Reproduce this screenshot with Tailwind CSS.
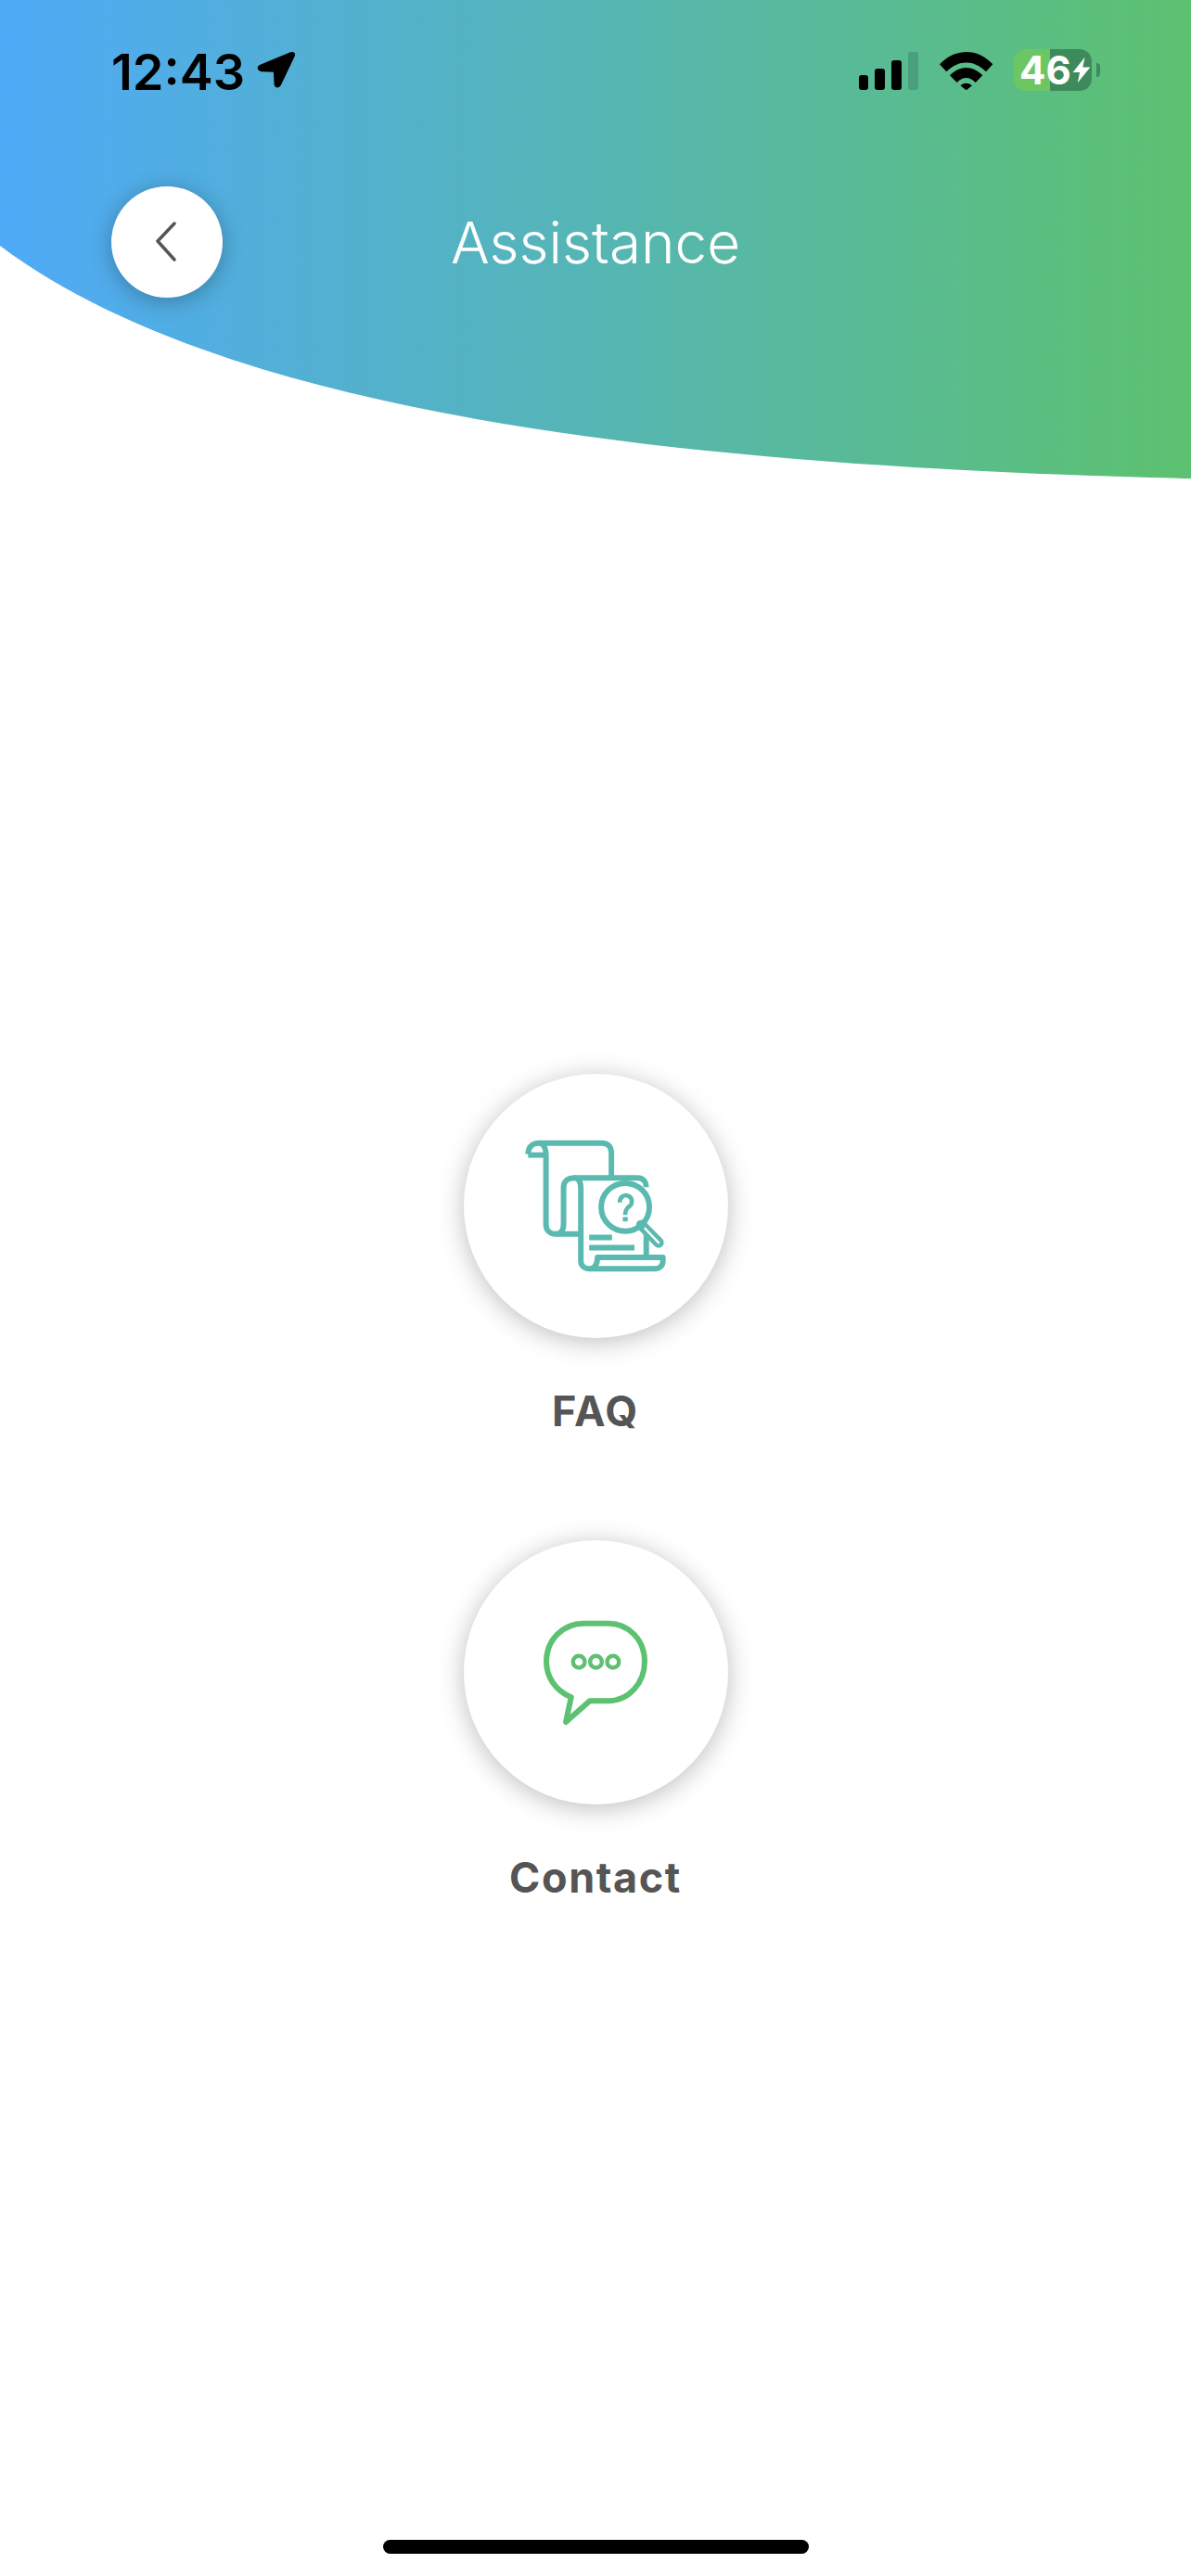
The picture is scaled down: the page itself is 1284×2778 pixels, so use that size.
<!DOCTYPE html>
<html lang="en">
<head>
    <meta charset="UTF-8">
    <meta name="viewport" content="width=device-width, initial-scale=1.0">
    <title>Assistance</title>
    <script src="https://cdn.jsdelivr.net/npm/@tailwindcss/browser@4"></script>
</head>
<body class="bg-white">
<div class="w-[1284px] h-[2778px] flex flex-col font-['Inter',sans-serif] overflow-hidden">

    <!-- Header with curved bottom edge -->
    <header class="h-[516px] shrink-0 bg-[linear-gradient(90deg,#4faaf7_0%,#5cc170_100%)] [clip-path:path('M0_0H1284V516C720_503_240_445_0_265Z')]">
        <!-- Status bar -->
        <div class="flex items-center justify-between h-[45px] mt-[53px] pl-[120px] pr-[107px]">
            <div class="flex items-center gap-[13px]">
                <span class="text-[54px] leading-[45px] font-semibold text-black mt-[3px]">12:43</span>
                <svg class="w-[41px] h-[41px]" viewBox="557 80 126 126" fill="#000"><path d="M668 84C680 80 686 88 682 98L637 192C630 206 615 203 614 190L612 150L572 148C556 146 555 130 568 125Z"/></svg>
            </div>
            <div class="flex items-center">
                <div class="flex items-end gap-[7px] h-[41px] mt-[2px]">
                    <div class="w-[10px] h-[16px] bg-black rounded-[3px]"></div>
                    <div class="w-[11px] h-[23px] bg-black rounded-[3px]"></div>
                    <div class="w-[11px] h-[32px] bg-black rounded-[3px]"></div>
                    <div class="w-[11px] h-[41px] bg-[#4a9f7c] rounded-[3px]"></div>
                </div>
                <svg class="w-[58px] h-[42px] ml-[23px]" viewBox="398 70 174 126" fill="#000">
                    <path d="M398 113C450 60 520 60 570 113L548 137C508 98 460 98 420 137Z"/>
                    <path d="M431 149C465 116 503 116 537 149L514 172C495 152 473 152 454 172Z"/>
                    <path d="M465 182C477 172 491 172 503 182L484 197Z"/>
                </svg>
                <div class="relative w-[84px] h-[45px] ml-[22px] rounded-[13px] bg-[linear-gradient(90deg,#6cc763_47%,#3f8a5c_47%)] flex items-center pl-[6px]">
                    <span class="text-[42px] leading-[45px] font-bold text-white">46</span>
                    <svg class="w-[20px] h-[29px] ml-[1px]" viewBox="820 95 62 85" fill="#fff"><path d="M862 95L822 145H845L838 180L880 128H855Z"/></svg>
                    <div class="absolute left-[89px] top-[15px] w-[4px] h-[15px] bg-[#3f8a5c] rounded-r-full"></div>
                </div>
            </div>
        </div>
        <!-- Nav row -->
        <div class="grid grid-cols-[120px_1fr_120px] items-center px-[120px] mt-[103px]">
            <button class="w-[120px] h-[120px] rounded-full bg-white flex items-center justify-center shadow-[0_4px_24px_rgba(0,0,0,0.28)]">
                <svg class="w-[22px] h-[44px] mr-[3px]" viewBox="0 0 22 44" fill="none" stroke="#555" stroke-width="3.5" stroke-linecap="round" stroke-linejoin="round"><path d="M20 2L2 21L20 41"/></svg>
            </button>
            <h1 class="text-center text-[62px] h-[120px] leading-[122px] font-[350] text-white">Assistance</h1>
            <div></div>
        </div>
    </header>

    <main class="flex-1 flex flex-col items-center pt-[642px]">
        <!-- FAQ -->
        <div class="w-[285px] h-[285px] rounded-full bg-white flex items-center justify-center shadow-[0_4px_28px_rgba(0,0,0,0.26)]">
            <svg class="w-[161px] h-[151px] mr-[2px]" viewBox="60 75 484 452" fill="none" stroke="#5abab0" stroke-width="18" stroke-linecap="butt" stroke-linejoin="round">
                <path d="M85 133C85 110 100 97 120 97H325C345 97 355 110 355 130V210"/>
                <path d="M85 136H138"/>
                <path d="M120 97C135 97 143 115 143 133V360C143 380 155 392 175 392H250"/>
                <path d="M175 392C190 392 200 380 200 360V240C200 220 215 210 235 210H440C460 210 468 225 468 240"/>
                <path d="M235 210C250 210 256 225 256 245V480C256 495 268 505 285 505C300 505 310 490 310 468H522V480C522 495 510 505 495 505H285"/>
                <path d="M468 390V468"/>
                <path d="M283 403H357M283 436H430"/>
                <circle cx="400" cy="305" r="78" fill="#fff"/>
                <path d="M452 363L508 420" stroke-width="34" stroke-linecap="round"/>
                <path d="M464 374L508 420" stroke="#fff" stroke-width="7" stroke-linecap="round"/>
                <path d="M382 290C382 270 398 265 406 267C425 271 425 295 412 303C403 310 400 315 400 330" stroke-width="14"/>
                <path d="M400 337V351" stroke-width="16"/>
            </svg>
        </div>
        <p class="mt-[49px] h-[60px] text-[45px] leading-[60px] font-[650] tracking-[1.6px] text-[#555]">FAQ</p>

        <!-- Contact -->
        <div class="mt-[109px] w-[285px] h-[285px] rounded-full bg-white flex items-center justify-center shadow-[0_4px_28px_rgba(0,0,0,0.26)]">
            <svg class="w-[117px] h-[117px]" viewBox="310 315 350 350" fill="none" stroke="#5cc170" stroke-width="18" stroke-linejoin="round">
                <path d="M405 570C355 550 325 505 325 455C325 385 380 332 445 332H525C590 332 642 385 642 455C642 525 590 582 525 582H465L388 650Z"/>
                <circle cx="430" cy="456" r="19" stroke-width="13"/>
                <circle cx="485" cy="456" r="19" stroke-width="13"/>
                <circle cx="540" cy="456" r="19" stroke-width="13"/>
            </svg>
        </div>
        <p class="mt-[49px] h-[60px] text-[45px] leading-[60px] font-[650] tracking-[1.6px] text-[#555]">Contact</p>
    </main>

    <!-- Home indicator -->
    <div class="w-[459px] h-[15px] shrink-0 self-center mb-[24px] bg-black rounded-full"></div>
</div>
</body>
</html>
